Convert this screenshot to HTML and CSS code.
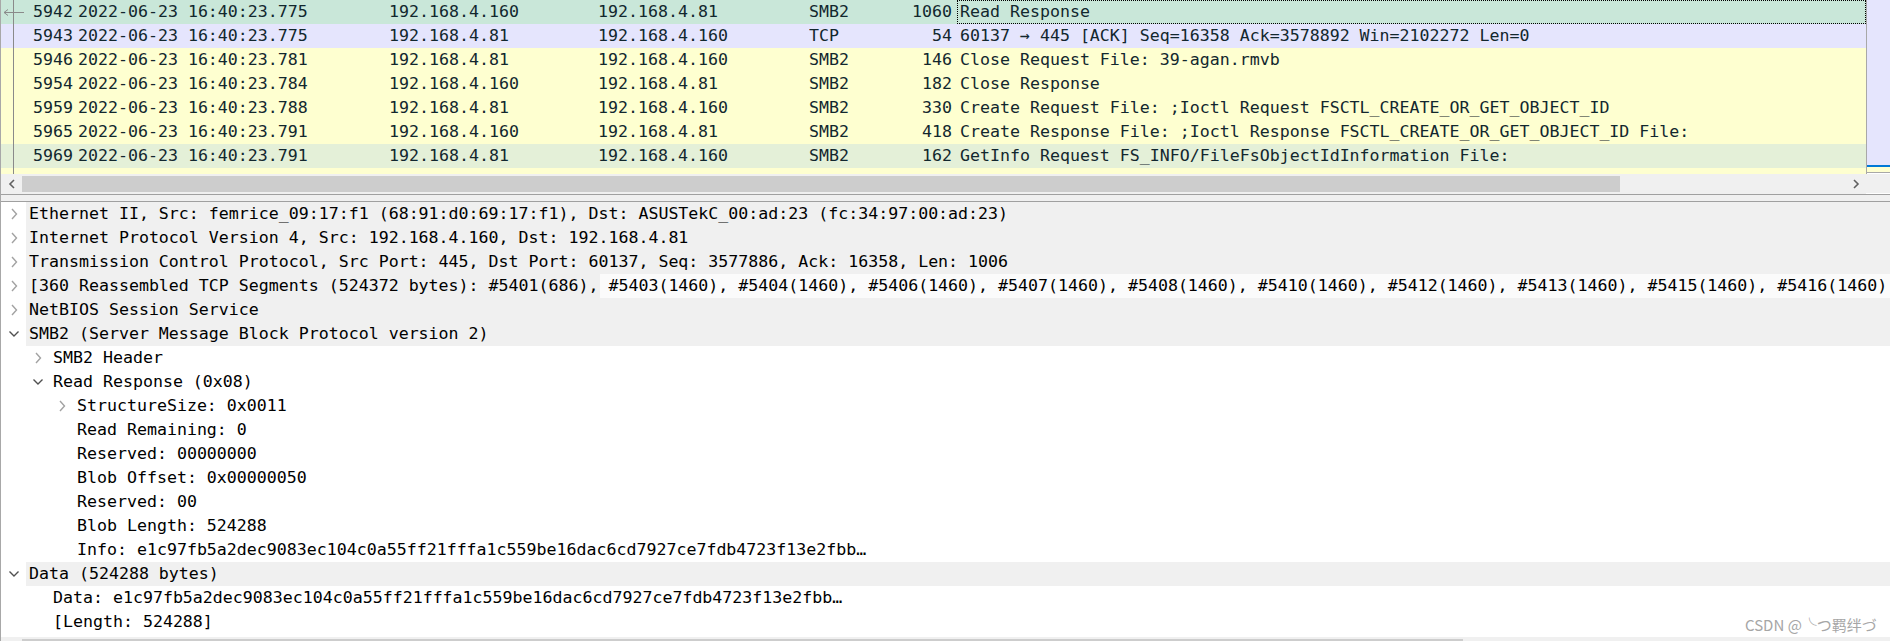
FILE: index.html
```html
<!DOCTYPE html>
<html>
<head>
  <title>SMB2 Read Response</title>
  <link rel="stylesheet" href="styles.css">
</head>
<body>
  <div class="window">

    <div class="packets">
      <div class="packet-list">
        <svg class="related" width="26" height="174" viewBox="0 0 26 174">
          <line x1="12.5" y1="0" x2="12.5" y2="174" stroke="#8a8a8a" stroke-width="1"/>
          <line x1="3" y1="12.5" x2="23" y2="12.5" stroke="#8a8a8a" stroke-width="1"/>
          <polyline points="7,9.5 3,12.5 7,15.5" fill="none" stroke="#8a8a8a" stroke-width="1"/>
        </svg>

        <div class="pkt pkt-focus">
          <span class="c-no">5942</span><span>2022-06-23 16:40:23.775</span><span>192.168.4.160</span><span>192.168.4.81</span><span>SMB2</span><span class="c-len">1060</span><span class="c-info">Read Response</span>
        </div>
        <div class="pkt pkt-tcp">
          <span class="c-no">5943</span><span>2022-06-23 16:40:23.775</span><span>192.168.4.81</span><span>192.168.4.160</span><span>TCP</span><span class="c-len">54</span><span class="c-info">60137 → 445 [ACK] Seq=16358 Ack=3578892 Win=2102272 Len=0</span>
        </div>
        <div class="pkt pkt-smb">
          <span class="c-no">5946</span><span>2022-06-23 16:40:23.781</span><span>192.168.4.81</span><span>192.168.4.160</span><span>SMB2</span><span class="c-len">146</span><span class="c-info">Close Request File: 39-agan.rmvb</span>
        </div>
        <div class="pkt pkt-smb">
          <span class="c-no">5954</span><span>2022-06-23 16:40:23.784</span><span>192.168.4.160</span><span>192.168.4.81</span><span>SMB2</span><span class="c-len">182</span><span class="c-info">Close Response</span>
        </div>
        <div class="pkt pkt-smb">
          <span class="c-no">5959</span><span>2022-06-23 16:40:23.788</span><span>192.168.4.81</span><span>192.168.4.160</span><span>SMB2</span><span class="c-len">330</span><span class="c-info">Create Request File: ;Ioctl Request FSCTL_CREATE_OR_GET_OBJECT_ID</span>
        </div>
        <div class="pkt pkt-smb">
          <span class="c-no">5965</span><span>2022-06-23 16:40:23.791</span><span>192.168.4.160</span><span>192.168.4.81</span><span>SMB2</span><span class="c-len">418</span><span class="c-info">Create Response File: ;Ioctl Response FSCTL_CREATE_OR_GET_OBJECT_ID File:</span>
        </div>
        <div class="pkt pkt-related">
          <span class="c-no">5969</span><span>2022-06-23 16:40:23.791</span><span>192.168.4.81</span><span>192.168.4.160</span><span>SMB2</span><span class="c-len">162</span><span class="c-info">GetInfo Request FS_INFO/FileFsObjectIdInformation File:</span>
        </div>
        <div class="pkt pkt-smb"></div>
      </div>

      <div class="vscroll">
        <div class="vscroll-map"></div>
        <div class="vscroll-mark"></div>
        <div class="vscroll-tail"></div>
      </div>
    </div>

    <div class="hscroll">
      <div class="scroll-btn">
        <svg width="8" height="10" viewBox="0 0 8 10"><polyline points="6,1 2,5 6,9" fill="none" stroke="#606060" stroke-width="1.6"/></svg>
      </div>
      <div class="scroll-thumb thumb-top"></div>
      <div class="scroll-track"></div>
      <div class="scroll-btn">
        <svg width="8" height="10" viewBox="0 0 8 10"><polyline points="2,1 6,5 2,9" fill="none" stroke="#606060" stroke-width="1.6"/></svg>
      </div>
      <div class="scroll-corner"></div>
    </div>

    <div class="splitter"></div>

    <div class="details">
      <div class="node top">
        <span class="twisty"><svg width="8" height="12" viewBox="0 0 8 12"><polyline points="2,1 6.5,6 2,11" fill="none" stroke="#a2a2a2" stroke-width="1.4"/></svg></span>
        <span class="label">Ethernet II, Src: femrice_09:17:f1 (68:91:d0:69:17:f1), Dst: ASUSTekC_00:ad:23 (fc:34:97:00:ad:23)</span>
      </div>
      <div class="node top">
        <span class="twisty"><svg width="8" height="12" viewBox="0 0 8 12"><polyline points="2,1 6.5,6 2,11" fill="none" stroke="#a2a2a2" stroke-width="1.4"/></svg></span>
        <span class="label">Internet Protocol Version 4, Src: 192.168.4.160, Dst: 192.168.4.81</span>
      </div>
      <div class="node top">
        <span class="twisty"><svg width="8" height="12" viewBox="0 0 8 12"><polyline points="2,1 6.5,6 2,11" fill="none" stroke="#a2a2a2" stroke-width="1.4"/></svg></span>
        <span class="label">Transmission Control Protocol, Src Port: 445, Dst Port: 60137, Seq: 3577886, Ack: 16358, Len: 1006</span>
      </div>
      <div class="node top hover">
        <span class="twisty"><svg width="8" height="12" viewBox="0 0 8 12"><polyline points="2,1 6.5,6 2,11" fill="none" stroke="#a2a2a2" stroke-width="1.4"/></svg></span>
        <span class="label">[360 Reassembled TCP Segments (524372 bytes): #5401(686), #5403(1460), #5404(1460), #5406(1460), #5407(1460), #5408(1460), #5410(1460), #5412(1460), #5413(1460), #5415(1460), #5416(1460)</span>
      </div>
      <div class="node top">
        <span class="twisty"><svg width="8" height="12" viewBox="0 0 8 12"><polyline points="2,1 6.5,6 2,11" fill="none" stroke="#a2a2a2" stroke-width="1.4"/></svg></span>
        <span class="label">NetBIOS Session Service</span>
      </div>
      <div class="node top">
        <span class="twisty"><svg width="12" height="8" viewBox="0 0 12 8"><polyline points="1.5,1.5 6,6 10.5,1.5" fill="none" stroke="#505050" stroke-width="1.4"/></svg></span>
        <span class="label">SMB2 (Server Message Block Protocol version 2)</span>
      </div>
      <div class="node lvl-1">
        <span class="twisty"><svg width="8" height="12" viewBox="0 0 8 12"><polyline points="2,1 6.5,6 2,11" fill="none" stroke="#a2a2a2" stroke-width="1.4"/></svg></span>
        <span class="label">SMB2 Header</span>
      </div>
      <div class="node lvl-1">
        <span class="twisty"><svg width="12" height="8" viewBox="0 0 12 8"><polyline points="1.5,1.5 6,6 10.5,1.5" fill="none" stroke="#505050" stroke-width="1.4"/></svg></span>
        <span class="label">Read Response (0x08)</span>
      </div>
      <div class="node lvl-2">
        <span class="twisty"><svg width="8" height="12" viewBox="0 0 8 12"><polyline points="2,1 6.5,6 2,11" fill="none" stroke="#a2a2a2" stroke-width="1.4"/></svg></span>
        <span class="label">StructureSize: 0x0011</span>
      </div>
      <div class="node lvl-2"><span class="twisty"></span><span class="label">Read Remaining: 0</span></div>
      <div class="node lvl-2"><span class="twisty"></span><span class="label">Reserved: 00000000</span></div>
      <div class="node lvl-2"><span class="twisty"></span><span class="label">Blob Offset: 0x00000050</span></div>
      <div class="node lvl-2"><span class="twisty"></span><span class="label">Reserved: 00</span></div>
      <div class="node lvl-2"><span class="twisty"></span><span class="label">Blob Length: 524288</span></div>
      <div class="node lvl-2"><span class="twisty"></span><span class="label">Info: e1c97fb5a2dec9083ec104c0a55ff21fffa1c559be16dac6cd7927ce7fdb4723f13e2fbb…</span></div>
      <div class="node top">
        <span class="twisty"><svg width="12" height="8" viewBox="0 0 12 8"><polyline points="1.5,1.5 6,6 10.5,1.5" fill="none" stroke="#505050" stroke-width="1.4"/></svg></span>
        <span class="label">Data (524288 bytes)</span>
      </div>
      <div class="node lvl-1"><span class="twisty"></span><span class="label">Data: e1c97fb5a2dec9083ec104c0a55ff21fffa1c559be16dac6cd7927ce7fdb4723f13e2fbb…</span></div>
      <div class="node lvl-1"><span class="twisty"></span><span class="label">[Length: 524288]</span></div>
    </div>

    <div class="hscroll">
      <div class="scroll-btn"></div>
      <div class="scroll-thumb thumb-bottom"></div>
      <div class="scroll-track"></div>
    </div>

    <div class="watermark">CSDN @╰つ羁绊づ</div>
  </div>
</body>
</html>
```

FILE: styles.css
```css
html, body {
  margin: 0;
  padding: 0;
  background: #fff;
}

.window {
  position: relative;
  width: 1890px;
  height: 641px;
  overflow: hidden;
  box-sizing: border-box;
  border-left: 1px solid #a8a8a8;
  font-family: "DejaVu Sans Mono", "Liberation Mono", monospace;
  font-size: 16.6px;
  line-height: 24px;
}

/* packet list */

.packets {
  display: flex;
  height: 174px;
}

.packet-list {
  position: relative;
  flex: 1;
  overflow: hidden;
  color: #12272e;
}

.related {
  position: absolute;
  left: 0;
  top: 0;
}

.pkt {
  display: grid;
  grid-template-columns: 77px 311px 209px 211px 80px 68px 1fr;
  height: 24px;
  white-space: nowrap;
}

.pkt span {
  overflow: hidden;
}

.pkt .c-no {
  text-align: right;
  padding-right: 5px;
}

.pkt .c-len {
  text-align: right;
  padding-right: 5px;
}

.pkt .c-info {
  padding-left: 3px;
  box-sizing: border-box;
}

.pkt-focus {
  background: #c9e7d9;
}

.pkt-focus .c-info {
  border: 1px dotted #000;
  padding-left: 2px;
  line-height: 22px;
}

.pkt-tcp {
  background: #e5e5fd;
}

.pkt-smb {
  background: #feffd0;
}

.pkt-related {
  background: #e4f0d8;
}

.vscroll {
  width: 23px;
  display: flex;
  flex-direction: column;
  border-left: 1px solid #a8a8a8;
}

.vscroll-map {
  height: 165px;
  background: #e5e5fd;
}

.vscroll-mark {
  height: 2px;
  background: #0078d7;
}

.vscroll-tail {
  height: 5px;
  background: #feffd0;
  border-bottom: 1px solid #a8a8a8;
}

/* scroll bars */

.hscroll {
  display: flex;
  height: 20px;
  background: #f0f0f0;
}

.scroll-btn {
  width: 21px;
  display: flex;
  align-items: center;
  justify-content: center;
}

.scroll-thumb {
  height: 16px;
  margin-top: 2px;
  background: #cdcdcd;
}

.thumb-top {
  width: 1598px;
}

.thumb-bottom {
  width: 1441px;
}

.scroll-track {
  flex: 1;
}

.scroll-corner {
  width: 24px;
  background: #f0f0f0;
  border-bottom: 1px solid #fff;
  box-sizing: border-box;
}

.splitter {
  height: 6px;
  background: #f0f0f0;
  border-top: 1px solid #a0a0a0;
  border-bottom: 1px solid #a0a0a0;
}

/* packet details */

.details {
  height: 435px;
  color: #000;
}

.node {
  display: flex;
  height: 24px;
  white-space: nowrap;
}

.twisty {
  flex: none;
  width: 25px;
  display: flex;
  align-items: center;
  justify-content: center;
}

.label {
  flex: 1;
  overflow: hidden;
  padding-left: 3px;
}

.node.top .label {
  background: #f0f0f0;
}

.node.hover .label {
  background: linear-gradient(to right, #f0f0f0 574px, #fbfbfb 574px);
}

.lvl-1 {
  padding-left: 24px;
}

.lvl-2 {
  padding-left: 48px;
}

.watermark {
  position: absolute;
  left: 1744px;
  top: 614px;
  font-family: "Noto Sans CJK SC", "Noto Sans", sans-serif;
  font-size: 15px;
  line-height: 22px;
  color: #a6a6a6;
  white-space: nowrap;
}
```
